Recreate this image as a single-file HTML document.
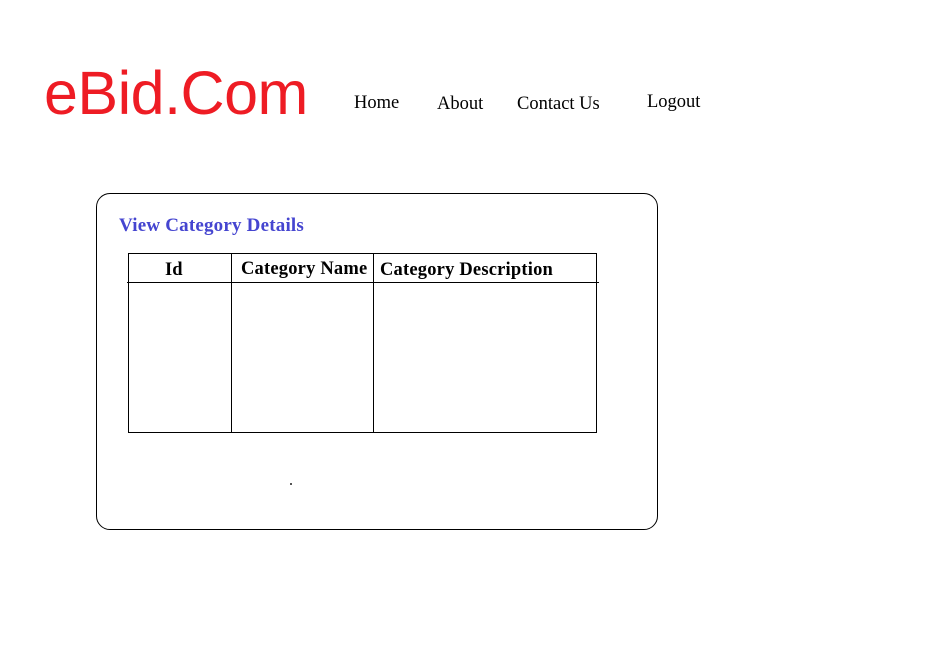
<!DOCTYPE html>
<html><head><meta charset="utf-8"><style>
body{margin:0;width:931px;height:658px;background:#fff;position:relative;overflow:hidden;font-family:"Liberation Serif",serif}
.a{position:absolute;white-space:nowrap}
.nav{font-size:18.5px;color:#000}
.th{font-size:18.5px;font-weight:bold;color:#000}
</style></head><body>
<div class="a" style="left:44px;top:58px;font-family:'Liberation Sans',sans-serif;font-size:61px;color:#ee1c24;letter-spacing:-0.5px">eBid.Com</div>
<div class="a nav" style="left:354px;top:93px">Home</div>
<div class="a nav" style="left:437px;top:94px">About</div>
<div class="a nav" style="left:517px;top:94px">Contact Us</div>
<div class="a nav" style="left:647px;top:92px">Logout</div>
<div class="a" style="left:96px;top:193px;width:560px;height:335px;border:1px solid #000;border-radius:14px"></div>
<div class="a" style="left:119px;top:215px;font-size:19px;font-weight:bold;color:#4545d0;letter-spacing:0.2px">View Category Details</div>
<div class="a" style="left:128px;top:253px;width:467px;height:178px;border:1px solid #000"></div>
<div class="a" style="left:127px;top:282px;width:472px;height:1px;background:#000"></div>
<div class="a" style="left:231px;top:253px;width:1px;height:179px;background:#000"></div>
<div class="a" style="left:373px;top:253px;width:1px;height:179px;background:#000"></div>
<div class="a th" style="left:165px;top:260px">Id</div>
<div class="a th" style="left:241px;top:259px;letter-spacing:0.2px">Category Name</div>
<div class="a th" style="left:380px;top:260px;letter-spacing:0.2px">Category Description</div>
<div class="a" style="left:290px;top:483px;width:2px;height:2px;background:#555"></div>
</body></html>
